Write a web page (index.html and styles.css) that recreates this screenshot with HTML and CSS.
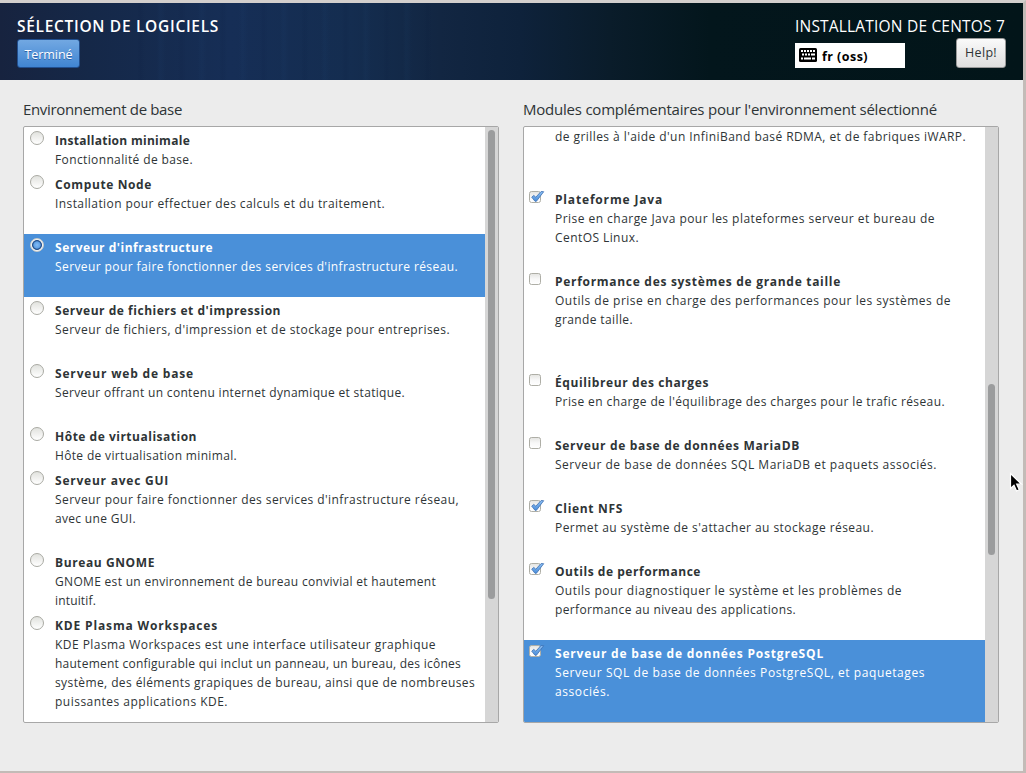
FILE: index.html
```
<!DOCTYPE html>
<html lang="fr">
<head>
<meta charset="utf-8">
<title>Installation de CentOS 7</title>
<link rel="stylesheet" href="styles.css">
</head>
<body>
<svg class="defs" width="0" height="0" aria-hidden="true">
  <defs>
    <linearGradient id="boxFill" x1="0" y1="0" x2="0" y2="1"><stop offset="0" stop-color="#e4e4e1"/><stop offset=".5" stop-color="#f8f8f8"/><stop offset="1" stop-color="#fff"/></linearGradient>
    <linearGradient id="tickFill" x1="0" y1="0" x2="0" y2="1"><stop offset="0" stop-color="#8fc0f2"/><stop offset="1" stop-color="#4a8edb"/></linearGradient>
    <symbol id="unchecked" viewBox="0 0 16 14"><rect x=".5" y="1.5" width="11" height="11" rx="2" fill="url(#boxFill)" stroke="#aeaea6"/></symbol>
    <symbol id="checked" viewBox="0 0 16 14"><rect x=".5" y="1.5" width="11" height="11" rx="2" fill="url(#boxFill)" stroke="#aeaea6"/><path d="M2.7 7.1 4.8 5.4 6.8 7.2 12.1 1.5 14.7 1.7 7.4 11.3 6 11.3Z" fill="url(#tickFill)" stroke="#3a6eb2" stroke-width=".8" stroke-linejoin="round"/></symbol>
  </defs>
</svg>
<div class="window">
  <header class="banner">
    <div class="banner-left">
      <h1><span data-w="202">SÉLECTION DE LOGICIELS</span></h1>
      <button class="btn primary"><span data-w="48">Terminé</span></button>
    </div>
    <div class="banner-right">
      <div class="product"><span data-w="210">INSTALLATION DE CENTOS 7</span></div>
      <div class="tools">
        <div class="layout">
          <svg width="18" height="14" viewBox="0 0 18 14"><rect width="18" height="14" rx="1.5"/><path d="M2 3h2m1 0h2m1 0h2m1 0h2m1 0h2M3 6.5h2m1 0h2m1 0h2m1 0h4M2 10.5h2m1 0h7m1 0h3" fill="none" stroke="#fff" stroke-width="2"/></svg>
          <span data-w="46">fr (oss)</span>
        </div>
        <button class="btn"><span data-w="32">Help!</span></button>
      </div>
    </div>
  </header>
  <main class="columns">
    <section>
      <h2><span data-w="159">Environnement de base</span></h2>
      <div class="panel">
        <ul class="list">
          <li class="row"><i class="radio"></i><div><b data-w="135">Installation minimale</b><p data-w="138">Fonctionnalité de base.</p></div></li>
          <li class="row gap1"><i class="radio"></i><div><b data-w="97">Compute Node</b><p data-w="330">Installation pour effectuer des calculs et du traitement.</p></div></li>
          <li class="row gap1 selected"><i class="radio on"></i><div><b data-w="158">Serveur d'infrastructure</b><p data-w="403">Serveur pour faire fonctionner des services d'infrastructure réseau.</p></div></li>
          <li class="row gap1"><i class="radio"></i><div><b data-w="226">Serveur de fichiers et d'impression</b><p data-w="395">Serveur de fichiers, d'impression et de stockage pour entreprises.</p></div></li>
          <li class="row gap1"><i class="radio"></i><div><b data-w="139">Serveur web de base</b><p data-w="350">Serveur offrant un contenu internet dynamique et statique.</p></div></li>
          <li class="row"><i class="radio"></i><div><b data-w="142">Hôte de virtualisation</b><p data-w="182">Hôte de virtualisation minimal.</p></div></li>
          <li class="row gap1"><i class="radio"></i><div><b data-w="114">Serveur avec GUI</b><p data-w="404">Serveur pour faire fonctionner des services d'infrastructure réseau,</p><p data-w="81">avec une GUI.</p></div></li>
          <li class="row"><i class="radio"></i><div><b data-w="100">Bureau GNOME</b><p data-w="381">GNOME est un environnement de bureau convivial et hautement</p><p data-w="41">intuitif.</p></div></li>
          <li class="row"><i class="radio"></i><div><b data-w="163">KDE Plasma Workspaces</b><p data-w="381">KDE Plasma Workspaces est une interface utilisateur graphique</p><p data-w="406">hautement configurable qui inclut un panneau, un bureau, des icônes</p><p data-w="420">système, des éléments grapiques de bureau, ainsi que de nombreuses</p><p data-w="173">puissantes applications KDE.</p></div></li>
        </ul>
        <div class="scrollbar"><div class="thumb env"></div></div>
      </div>
    </section>
    <section>
      <h2><span data-w="414">Modules complémentaires pour l'environnement sélectionné</span></h2>
      <div class="panel">
        <ul class="list">
          <li class="row partial"><div><p data-w="411">de grilles à l'aide d'un InfiniBand basé RDMA, et de fabriques iWARP.</p></div></li>
          <li class="row gap1"><svg class="check"><use href="#checked"/></svg><div><b data-w="108">Plateforme Java</b><p data-w="380">Prise en charge Java pour les plateformes serveur et bureau de</p><p data-w="84">CentOS Linux.</p></div></li>
          <li class="row gap2"><svg class="check"><use href="#unchecked"/></svg><div><b data-w="286">Performance des systèmes de grande taille</b><p data-w="396">Outils de prise en charge des performances pour les systèmes de</p><p data-w="78">grande taille.</p></div></li>
          <li class="row gap1"><svg class="check"><use href="#unchecked"/></svg><div><b data-w="154">Équilibreur des charges</b><p data-w="390">Prise en charge de l'équilibrage des charges pour le trafic réseau.</p></div></li>
          <li class="row gap1"><svg class="check"><use href="#unchecked"/></svg><div><b data-w="245">Serveur de base de données MariaDB</b><p data-w="382">Serveur de base de données SQL MariaDB et paquets associés.</p></div></li>
          <li class="row gap1"><svg class="check"><use href="#checked"/></svg><div><b data-w="68">Client NFS</b><p data-w="319">Permet au système de s'attacher au stockage réseau.</p></div></li>
          <li class="row gap1"><svg class="check"><use href="#checked"/></svg><div><b data-w="146">Outils de performance</b><p data-w="347">Outils pour diagnostiquer le système et les problèmes de</p><p data-w="241">performance au niveau des applications.</p></div></li>
          <li class="row gap1 selected"><svg class="check"><use href="#checked"/></svg><div><b data-w="269">Serveur de base de données PostgreSQL</b><p data-w="370">Serveur SQL de base de données PostgreSQL, et paquetages</p><p data-w="55">associés.</p></div></li>
        </ul>
        <div class="scrollbar"><div class="thumb addons"></div></div>
      </div>
    </section>
  </main>
  <svg class="cursor" width="14" height="21" viewBox="0 0 14 21"><path d="M1.5 1.5V16.5L5 13.2 7.6 19 10.3 17.8 7.7 12.2H12.5Z" fill="#000" stroke="#fff" stroke-width="1.2"/></svg>
</div>
<script src="script.js"></script>
</body>
</html>
```
FILE: styles.css
```
* { box-sizing: border-box; }
body {
  margin: 0;
  background: #c3bbb7;
  color: #2e3436;
  font-family: "Open Sans", "Noto Sans", sans-serif;
  font-size: 12px;
}
h1, h2, p, ul { margin: 0; padding: 0; font-weight: 400; }
.defs { position: absolute; }
.window {
  width: 1026px;
  height: 773px;
  overflow: hidden;
  background: #ececec;
  border: solid #c3bbb7;
  border-width: 3px 3px 2px 0;
  border-top-color: #d3cfcd;
}
.banner {
  display: flex;
  justify-content: space-between;
  height: 77px;
  padding: 0 18px 0 17px;
  color: #fff;
  background:
    repeating-linear-gradient(90deg, transparent 0 7px, rgba(5, 20, 55, .08) 10px 11px, transparent 15px 27px, rgba(40, 90, 145, .06) 30px 31px, transparent 36px 41px) 130px 0 / 310px 100% no-repeat,
    linear-gradient(90deg, #17233f 0, #152848 90px, #162e56 230px, #142d50 350px, #122642 440px, #0e223b 520px, #0a1c2a 610px, #03161c 710px, #021519 100%);
}
.banner-left { display: flex; flex-direction: column; align-items: flex-start; }
h1, .product { height: 36px; padding-top: 13px; font-size: 15.5px; line-height: 20px; white-space: nowrap; }
h1 { font-weight: 600; }
.product { height: 35px; }
.btn {
  display: flex;
  justify-content: center;
  align-items: center;
  width: 50px;
  height: 30px;
  padding: 0 0 1px;
  border: 1px solid #999;
  border-radius: 3px;
  background: linear-gradient(#fafafa, #dedede);
  color: #2e3436;
  font: inherit;
  font-size: 12.5px;
}
.btn.primary {
  width: 63px;
  height: 29px;
  padding: 1px 0 0;
  border-color: #214f8f;
  background: linear-gradient(#72a8e2, #4085d2);
  color: #fff;
  text-shadow: 0 1px #2b62a8;
}
.tools { display: flex; justify-content: space-between; width: 211px; }
.banner-right { width: 211px; margin-right: -1px; }
.layout {
  display: flex;
  align-items: center;
  gap: 5px;
  width: 110px;
  height: 25px;
  margin-top: 5px;
  padding: 0 4px;
  background: #fff;
  color: #000;
  font-size: 12.5px;
  font-weight: 700;
}
.layout svg { margin-bottom: 2px; }
.layout span { padding-top: 1px; }
.columns {
  display: grid;
  grid-template-columns: 476px 476px;
  gap: 24px;
  padding: 19px 0 0 23px;
}
h2 { height: 27px; font-size: 15px; line-height: 20px; white-space: nowrap; }
.panel {
  display: flex;
  height: 597px;
  overflow: hidden;
  border: 1px solid #a7a7a7;
  border-radius: 2px;
  background: #fff;
}
.list { flex: 1; list-style: none; }
.row {
  display: grid;
  grid-template-columns: 31px 1fr;
  padding: 4px 0 2px;
  line-height: 19px;
  white-space: nowrap;
}
.row b, .row p { display: block; width: max-content; height: 19px; }
.row b { font-weight: 700; }
.gap1 { padding-bottom: 21px; }
.gap2 { padding-bottom: 40px; }
.partial { padding: 0 0 40px 31px; }
.selected { background: #4a90d9; color: #fff; }
.radio {
  width: 14px;
  height: 14px;
  margin: 0 0 0 6px;
  border: 1px solid #a9aaa3;
  border-radius: 50%;
  background: linear-gradient(#e1e2de, #fff);
}
.radio.on {
  border-color: #c9cbc8;
  background: radial-gradient(circle at 50% 50%, #86bbf2 0, #5c9fe6 3.3px, #2a5590 4px 4.6px, #f2f4f6 5.3px);
}
.check { width: 16px; height: 14px; margin-left: 5px; }
.scrollbar { width: 13px; padding: 3px; background: #d6d6d6; }
.thumb { width: 7px; border-radius: 3.5px; background: #9b9c9d; }
.env { height: 469px; }
.addons { height: 171px; margin-top: 254px; }
.cursor { position: absolute; left: 1009px; top: 472px; }
```
FILE: script.js
```
// Track each line of text out to its measured width.
document.querySelectorAll('[data-w]').forEach(el => {
  const range = document.createRange();
  range.selectNodeContents(el);
  const natural = range.getBoundingClientRect().width;
  const spacing = (Number(el.dataset.w) - natural) / el.textContent.length;
  el.style.letterSpacing = spacing.toFixed(3) + 'px';
});
```
